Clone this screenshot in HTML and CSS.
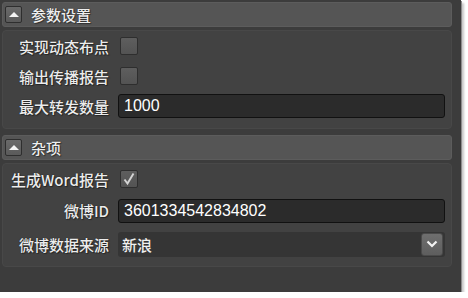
FILE: index.html
```html
<!DOCTYPE html>
<html lang="zh-CN">
<head>
    <meta charset="UTF-8">
    <title>属性</title>
    <link rel="stylesheet" href="styles.css">
</head>
<body>
    <div class="window">
        <div class="group">
            <div class="group-header">
                <span class="toggle"><span class="arrow"></span></span>
                <span class="group-title">参数设置</span>
            </div>
            <div class="group-body">
                <label class="prop-label">实现动态布点</label>
                <div class="prop-value"><span class="checkbox"></span></div>

                <label class="prop-label">输出传播报告</label>
                <div class="prop-value"><span class="checkbox"></span></div>

                <label class="prop-label">最大转发数量</label>
                <div class="prop-value"><input class="text-input" type="text" value="1000"></div>
            </div>
        </div>

        <div class="group">
            <div class="group-header">
                <span class="toggle"><span class="arrow"></span></span>
                <span class="group-title">杂项</span>
            </div>
            <div class="group-body misc">
                <label class="prop-label">生成Word报告</label>
                <div class="prop-value">
                    <span class="checkbox checked">
                        <svg width="14" height="14" viewBox="0 0 14 14">
                            <path d="M2.5 7.5 L5.5 11.5 L11.5 1.5" fill="none" stroke="#d4d4d4" stroke-width="1.9"/>
                        </svg>
                    </span>
                </div>

                <label class="prop-label">微博ID</label>
                <div class="prop-value"><input class="text-input" type="text" value="3601334542834802"></div>

                <label class="prop-label">微博数据来源</label>
                <div class="prop-value">
                    <div class="combo">
                        <span class="combo-text">新浪</span>
                        <span class="combo-button">
                            <svg width="12" height="8" viewBox="0 0 12 8">
                                <path d="M1.5 1.5 L6 6 L10.5 1.5" fill="none" stroke="#f2f2f2" stroke-width="2.2"/>
                            </svg>
                        </span>
                    </div>
                </div>
            </div>
        </div>
    </div>
</body>
</html>
```

FILE: styles.css
```css
body {
    margin: 0;
    padding: 0;
    background-color: #ffffff;
    font-family: "Noto Sans CJK SC", "Noto Sans", sans-serif;
}

.window {
    width: 450px;
    height: 290px;
    padding: 2px 9px 0 2px;
    background-color: #3c3c3c;
    box-shadow: 1px 1px 0 #8c8c8c, 3px 3px 2px #c8c8c8;
}

.group {
    margin-bottom: 6px;
}

.group-header {
    display: flex;
    align-items: center;
    height: 23px;
    background-color: #555555;
    border: 1px solid #5c5c5c;
    border-radius: 3px;
    margin-bottom: 3px;
}

.toggle {
    display: flex;
    justify-content: center;
    align-items: center;
    width: 15px;
    height: 15px;
    margin-left: 2px;
    background: linear-gradient(#6a6a6a, #5a5a5a);
    border: 1px solid #2e2e2e;
    border-radius: 2px;
}

.arrow {
    width: 0;
    height: 0;
    border-left: 5px solid transparent;
    border-right: 5px solid transparent;
    border-bottom: 5px solid #f4f4f4;
    margin-top: -1px;
}

.group-title {
    margin-left: 9px;
    font-size: 15px;
    font-weight: 500;
    color: #eeeeee;
    text-shadow: 0 0 1px #111, 1px 1px 1px rgba(0, 0, 0, 0.4);
}

.group-body {
    display: grid;
    grid-template-columns: 106px 1fr;
    grid-auto-rows: 30px;
    column-gap: 9px;
    align-items: center;
    padding: 0 6px 7px 0;
    background-color: #424242;
    border: 1px solid #484848;
    border-radius: 4px;
}

.group-body.misc {
    grid-template-rows: 30px 33px 34px;
    padding-bottom: 5px;
}

.prop-label {
    text-align: right;
    font-size: 15px;
    font-weight: 500;
    color: #ececec;
    text-shadow: 0 0 1px #111, 1px 1px 1px rgba(0, 0, 0, 0.4);
    white-space: nowrap;
}

.prop-value {
    display: flex;
    align-items: center;
}

.checkbox {
    display: flex;
    justify-content: center;
    align-items: center;
    width: 16px;
    height: 16px;
    margin-left: 2px;
    background: linear-gradient(#5e5e5e, #535353);
    border: 1px solid #2e2e2e;
    border-radius: 2px;
}

.text-input {
    box-sizing: border-box;
    width: 100%;
    height: 24px;
    padding: 0 5px;
    background-color: #2b2b2b;
    border: 1px solid #111111;
    border-radius: 3px;
    color: #ffffff;
    font-family: "Liberation Sans", Arial, sans-serif;
    font-size: 16px;
    outline: none;
}

.combo {
    box-sizing: border-box;
    display: flex;
    align-items: center;
    justify-content: space-between;
    width: 100%;
    height: 25px;
    padding: 0 2px 0 4px;
    background-color: #353535;
    border-radius: 3px;
}

.combo-text {
    font-size: 15px;
    font-weight: 500;
    color: #f0f0f0;
}

.combo-button {
    display: flex;
    justify-content: center;
    align-items: center;
    width: 20px;
    height: 21px;
    background: linear-gradient(#6e6e6e, #5e5e5e);
    border: 1px solid #4a4a4a;
    border-radius: 3px;
}
```
